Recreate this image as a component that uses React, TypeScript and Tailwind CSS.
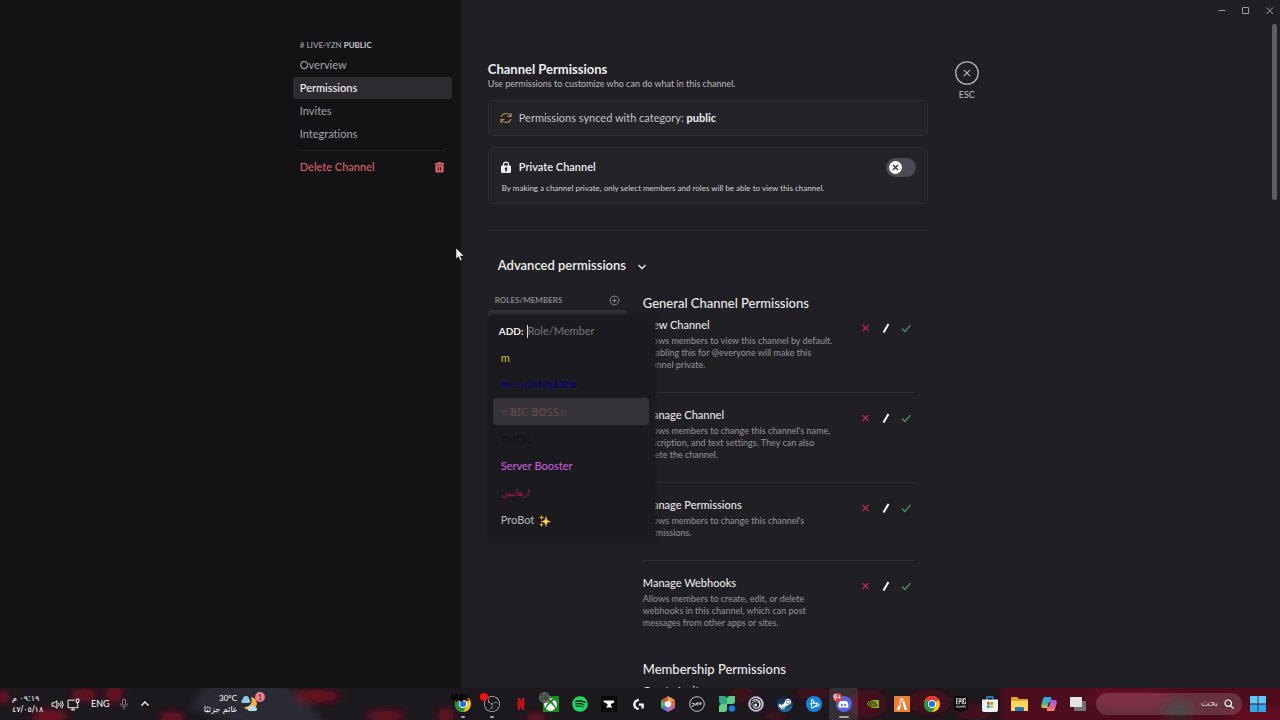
import React, { useState } from 'react';
import { FaDiscord, FaSpotify, FaSteamSymbol, FaXbox } from 'react-icons/fa';
import {
  SiEpicgames,
  SiFivem,
  SiLogitechg,
  SiNetflix,
  SiNvidia,
  SiObsstudio,
  SiUbisoft,
} from 'react-icons/si';

type PermissionValue = 'deny' | 'neutral' | 'allow';

interface Permission {
  id: string;
  title: string;
  description?: string;
}

interface Role {
  id: string;
  label: React.ReactNode;
  className: string;
}

const navItems = ['Overview', 'Permissions', 'Invites', 'Integrations'];

const generalPermissions: Permission[] = [
  {
    id: 'view-channel',
    title: 'View Channel',
    description:
      'Allows members to view this channel by default. Disabling this for @everyone will make this channel private.',
  },
  {
    id: 'manage-channel',
    title: 'Manage Channel',
    description:
      "Allows members to change this channel's name, description, and text settings. They can also delete the channel.",
  },
  {
    id: 'manage-permissions',
    title: 'Manage Permissions',
    description: "Allows members to change this channel's permissions.",
  },
  {
    id: 'manage-webhooks',
    title: 'Manage Webhooks',
    description:
      'Allows members to create, edit, or delete webhooks in this channel, which can post messages from other apps or sites.',
  },
];

const membershipPermissions: Permission[] = [{ id: 'create-invite', title: 'Create Invite' }];

const Sparkles = () => (
  <svg viewBox="0 0 24 24" className="ml-[2px] inline-block size-[12px]" aria-hidden="true">
    <path d="M14 3c1 7 2.500 8.500 9 10-6.500 1.500-8 3-9 10-1-7-2.500-8.500-10-10 7.500-1.500 9-3 10-10z" fill="#fcd34d" stroke="#fcd34d" />
    <path d="M5 1c.5 3 1 3.500 4 4-3 .5-3.500 1-4 4-.5-3-1-3.500-4-4 3-.5 3.500-1 4-4zM5 16c.4 2.500 1 3 3.500 3.500C6 20 5.400 20.500 5 23c-.4-2.500-1-3-3.500-3.500C4 19 4.600 18.500 5 16z" fill="#fbbf24" stroke="#fbbf24" />
  </svg>
);

const roles: Role[] = [
  { id: 'm', label: 'm', className: 'text-[11px] text-[#d3b92c]' },
  {
    id: 'co-owner',
    label: (
      <>
        ♚co-
        <span className="font-['DejaVu_Serif',serif] text-[10px] font-bold italic">OWNER</span>♚
      </>
    ),
    className: 'text-[10px] text-[#0b0570]',
  },
  { id: 'big-boss', label: '☆𝔹𝕀𝔾 𝔹𝕆𝕊𝕊☆', className: 'text-[10px] text-[#7d4f5c]' },
  { id: 'dark', label: 'ηιοΩε', className: 'text-[11px] text-[#101012]' },
  { id: 'booster', label: 'Server Booster', className: 'text-[11px] text-[#d45fe0]' },
  { id: 'arabic', label: 'ارهابيين', className: 'text-[9px] text-[#a3194a]' },
  {
    id: 'probot',
    label: (
      <>
        ProBot <Sparkles />
      </>
    ),
    className: 'text-[11px] text-[#b5b6bb]',
  },
];

const Sidebar = () => {
  const [active, setActive] = useState('Permissions');

  return (
    <aside className="flex w-[36%] shrink-0 justify-end bg-[#131315] pr-[9px] pt-[38px]">
      <nav className="w-[159px]">
        <h2 className="px-[7px] text-[8px] leading-[14px] font-bold text-[#8c8d93]">
          # LIVE-YZN <span className="text-[#c9cacf]">PUBLIC</span>
        </h2>
        <div className="mt-[2px] flex flex-col gap-px">
          {navItems.map((item) => (
            <button
              key={item}
              type="button"
              onClick={() => setActive(item)}
              className={`h-[22px] rounded-[3px] px-[7px] text-left text-[11px] ${
                item === active ? 'bg-[#2c2c30] font-medium text-[#f2f2f4]' : 'text-[#a3a4aa]'
              }`}
            >
              {item}
            </button>
          ))}
        </div>
        <hr className="mx-[7px] my-[5px] border-[#242428]" />
        <button
          type="button"
          className="flex h-[22px] w-full items-center justify-between px-[7px] text-[11px] font-medium text-[#d95f6b]"
        >
          Delete Channel
          <svg viewBox="0 0 24 24" className="size-[11px]" fill="currentColor" aria-hidden="true">
            <path d="M9 0h6l1 2h6v4H2V2h6z" />
            <path fillRule="evenodd" d="M3 7h18v13a3 3 0 0 1-3 3H6a3 3 0 0 1-3-3zm5.500 4v8h2v-8zm5 0v8h2v-8z" />
          </svg>
        </button>
      </nav>
    </aside>
  );
};

const WindowControls = () => (
  <div className="flex h-[22px] shrink-0 items-center justify-end gap-[14px] pr-[5px] text-[#9b9ba3]">
    <button type="button" aria-label="Minimize">
      <svg viewBox="0 0 10 10" className="size-[10px]" stroke="currentColor" fill="none">
        <path d="M1.500 4.500h7" />
      </svg>
    </button>
    <button type="button" aria-label="Maximize">
      <svg viewBox="0 0 10 10" className="size-[10px]" stroke="currentColor" fill="none">
        <path d="M1.500 1.500h6v6h-6z" />
      </svg>
    </button>
    <button type="button" aria-label="Close window">
      <svg viewBox="0 0 10 10" className="size-[10px]" stroke="currentColor" fill="none">
        <path d="m1.500 1.500 6.500 6.500M8 1.500 1.500 8" />
      </svg>
    </button>
  </div>
);

const choices: { value: PermissionValue; color: string; path: string; width: number }[] = [
  { value: 'deny', color: 'text-[#b32c48]', path: 'M5.500 6l6 6M11.500 6l-6 6', width: 1.2 },
  { value: 'neutral', color: 'text-white', path: 'M11.500 5l-5 8.500', width: 2 },
  { value: 'allow', color: 'text-[#469165]', path: 'M5 9.500l3 3 5.500-6.500', width: 1.2 },
];

const PermissionRow = ({ permission }: { permission: Permission }) => {
  const [value, setValue] = useState<PermissionValue>('neutral');

  return (
    <li className="flex justify-between border-b border-[#303035] pt-[14px] pb-[21px] first:pt-0 last:border-b-0 last:pb-0">
      <div className="w-[190px]">
        <h4 className="text-[11px] leading-[16px] font-medium text-[#e6e6e9]">{permission.title}</h4>
        {permission.description && (
          <p className="mt-[2px] text-[9px] leading-[12px] text-[#95969c]">{permission.description}</p>
        )}
      </div>
      <div className="mt-[2px] flex gap-[2px]" role="radiogroup" aria-label={permission.title}>
        {choices.map((choice) => (
          <label key={choice.value} className={`relative size-[18px] rounded-[3px] ${choice.color}`}>
            <input
              type="radio"
              name={permission.id}
              aria-label={choice.value}
              checked={value === choice.value}
              onChange={() => setValue(choice.value)}
              className="sr-only"
            />
            <svg viewBox="0 0 18 18" className="size-[18px]" fill="none" stroke="currentColor" strokeWidth={choice.width}>
              <path d={choice.path} />
            </svg>
          </label>
        ))}
      </div>
    </li>
  );
};

const PermissionSection = ({ title, items }: { title: string; items: Permission[] }) => (
  <section>
    <h3 className="text-[13px] leading-[20px] font-medium text-[#e9e9ec]">{title}</h3>
    <ul className="mt-[4px]">
      {items.map((item) => (
        <PermissionRow key={item.id} permission={item} />
      ))}
    </ul>
  </section>
);

const RolePicker = () => (
  <div className="absolute top-[22px] left-0 z-10 w-[167px] rounded-[4px] bg-[#1b1b1f] pt-[4px] pr-[6px] pb-[8px] pl-[5px] shadow-[0_0_4px_1px_#1b1b1f]">
    <div className="flex h-[25px] items-center gap-[3px] px-[6px]">
      <label htmlFor="role-search" className="text-[10px] font-bold text-[#ececef]">
        ADD:
      </label>
      <div className="flex min-w-0 flex-1 items-center">
        <span className="h-[13px] w-px bg-[#dcdce0]" />
        <input
          id="role-search"
          placeholder="Role/Member"
          className="w-full min-w-0 bg-transparent text-[11px] outline-none placeholder:text-[#77787f]"
        />
      </div>
    </div>
    <ul>
      {roles.map((role) => (
        <li key={role.id}>
          <button
            type="button"
            className={`block h-[27px] w-full overflow-hidden rounded-[3px] px-[8px] text-left leading-[26px] ${role.className} ${
              role.id === 'big-boss' ? 'bg-[#343438]' : ''
            }`}
          >
            {role.label}
          </button>
        </li>
      ))}
    </ul>
  </div>
);

const Settings = () => {
  const [isPrivate, setIsPrivate] = useState(false);

  return (
    <main className="flex min-h-0 flex-1 gap-[27px] overflow-hidden pl-[27px]">
      <div className="w-[440px] pt-[39px]">
        <h1 className="text-[13px] leading-[17px] font-bold text-[#ededf0]">Channel Permissions</h1>
        <p className="text-[9px] leading-[12px] text-[#b9babf]">
          Use permissions to customize who can do what in this channel.
        </p>
        <div className="mt-[10px] flex h-[36px] items-center gap-[7px] rounded-[6px] border border-[#2d2d32] bg-[#232328] px-[11px] text-[11px] text-[#c3c4c9]">
          <svg viewBox="0 0 24 24" className="size-[12px] text-[#c08a50]" fill="none" stroke="currentColor" strokeWidth="2.400" aria-hidden="true">
            <path d="M2 10C3.500 5.500 7 3 12 3c4 0 7 2 9 5M22 2v7h-7M22 14c-1.500 4.500-5 7-10 7-4 0-7-2-9-5M2 22v-7h7" />
          </svg>
          <p>
            Permissions synced with category: <strong className="font-bold text-[#efeff1]">public</strong>
          </p>
        </div>
        <div className="mt-[11px] rounded-[6px] border border-[#2d2d32] bg-[#232328] px-[11px] pt-[9px] pb-[9px]">
          <div className="flex h-[20px] items-center gap-[7px]">
            <svg viewBox="0 0 24 24" className="size-[12px] text-[#eeeef0]" fill="none" aria-hidden="true">
              <path d="M7 10V7a5 5 0 0 1 10 0v3" stroke="currentColor" strokeWidth="2.500" />
              <path fillRule="evenodd" d="M4 9h16a2 2 0 0 1 2 2v10a3 3 0 0 1-3 3H5a3 3 0 0 1-3-3V11a2 2 0 0 1 2-2zm6.500 8v4h3v-4a2.500 2.500 0 1 0-3 0z" fill="currentColor" />
            </svg>
            <label htmlFor="private-channel" className="flex-1 text-[11px] font-semibold text-[#ededf0]">
              Private Channel
            </label>
            <label className="relative flex h-[19px] w-[30px] items-center rounded-full bg-[#494a53] px-[3px]">
              <input
                id="private-channel"
                type="checkbox"
                checked={isPrivate}
                onChange={(e) => setIsPrivate(e.target.checked)}
                className="sr-only"
              />
              <span className={`size-[13px] rounded-full bg-white ${isPrivate ? 'ml-auto' : ''}`}>
                <svg viewBox="0 0 13 13" className="size-[13px]" stroke="#3b3c44" strokeWidth="1.600" fill="none">
                  <path d="m4 4 5 5M9 4 4 9" />
                </svg>
              </span>
            </label>
          </div>
          <p className="mt-[5px] px-[2px] text-[8px] leading-[12px] text-[#d2d3d7]">
            By making a channel private, only select members and roles will be able to view this channel.
          </p>
        </div>
        <hr className="mt-[26px] border-[#303035]" />
        <button type="button" className="mt-[25px] ml-[10px] flex h-[20px] items-center gap-[11px] text-[13px] font-semibold text-[#ededf0]">
          Advanced permissions
          <svg viewBox="0 0 10 10" className="size-[10px]" fill="none" stroke="currentColor" strokeWidth="1.300" aria-hidden="true">
            <path d="m1.500 4 3.500 3.500 3.500-3.500" />
          </svg>
        </button>
        <div className="mt-[17px] flex gap-[16px] pr-[13px]">
          <div className="relative w-[139px] shrink-0">
            <div className="flex h-[14px] items-center justify-between px-[7px]">
              <h3 className="text-[8px] font-bold text-[#85868d]">ROLES/MEMBERS</h3>
              <button type="button" aria-label="Add role or member">
                <svg viewBox="0 0 12 12" className="size-[11px] text-[#94959b]" fill="none" stroke="currentColor" aria-hidden="true">
                  <circle cx="6" cy="6" r="4.800" />
                  <path d="M6 3.500v5M3.500 6h5" />
                </svg>
              </button>
            </div>
            <div className="mt-[3px] h-[22px] rounded-[3px] bg-[#343438]" />
            <RolePicker />
          </div>
          <div className="flex min-w-0 flex-1 flex-col gap-[30px]">
            <PermissionSection title="General Channel Permissions" items={generalPermissions} />
            <PermissionSection title="Membership Permissions" items={membershipPermissions} />
          </div>
        </div>
      </div>
      <button type="button" className="flex h-fit flex-col items-center pt-[39px] text-[9px] leading-[12px] font-medium text-[#b4b5ba]">
        <svg viewBox="0 0 24 24" className="mb-[4px] size-[24px]" fill="none" stroke="currentColor" aria-hidden="true">
          <circle cx="12" cy="12" r="11.200" strokeWidth="1.300" />
          <path d="m8.800 8.800 6.400 6.400M15.200 8.800l-6.400 6.400" strokeWidth="1.100" />
        </svg>
        ESC
      </button>
      <div className="ml-auto pt-[2px] pr-[3px]">
        <div className="h-[176px] w-[5px] rounded-full bg-[#5e5e66]" />
      </div>
    </main>
  );
};

const Chrome = () => (
  <svg viewBox="0 0 24 24" className="size-[16px]" aria-hidden="true">
    <circle cx="12" cy="12" r="12" fill="#fbc116" />
    <path d="M12 12 1.600 6A12 12 0 0 1 22.400 6z" fill="#e33b2e" />
    <path d="M12 12 1.600 6A12 12 0 0 0 12 24l5.200-9z" fill="#229342" />
    <circle cx="12" cy="12" r="6" fill="#fff" />
    <circle cx="12" cy="12" r="4.600" fill="#1a73e8" />
  </svg>
);

const taskbarApps: { name: string; icon: React.ReactNode; running?: boolean; active?: boolean }[] = [
  {
    name: 'Chrome profile',
    running: true,
    icon: (
      <div className="relative">
        <Chrome />
        <svg viewBox="0 0 20 9" className="absolute -top-[3px] -left-[4px] h-[9px] w-[20px]" aria-hidden="true">
          <path d="M0 1l3 2 2-3 3 3 3-3 2 3 3-2 2 3-2 2 1 2-4-1-3 2-2-2-3 2-1-3-4 1z" fill="#050505" />
        </svg>
      </div>
    ),
  },
  {
    name: 'OBS Studio',
    running: true,
    icon: (
      <div className="relative text-[#b9b9bd]">
        <SiObsstudio size={16} />
        <span className="absolute -top-[3px] -left-[4px] size-[8px] rounded-full bg-[#f20d0d]" />
      </div>
    ),
  },
  { name: 'Netflix', icon: <SiNetflix size={12} className="text-[#d10d18]" /> },
  {
    name: 'Xbox',
    icon: (
      <div className="relative flex size-[16px] items-center justify-center bg-[#168b1c] text-white">
        <FaXbox size={13} />
        <span className="absolute -top-[4px] -left-[4px] flex size-[11px] items-center justify-center rounded-full bg-[#606060] text-[7px] text-[#222]">
          18
        </span>
      </div>
    ),
  },
  { name: 'Spotify', icon: <FaSpotify size={16} className="text-[#1ed760]" /> },
  {
    name: 'CurseForge',
    icon: (
      <svg viewBox="0 0 16 16" className="size-[16px]" aria-hidden="true">
        <path d="M0 0h16v16H0z" fill="#060606" />
        <path d="M2.500 4.500H13V6.500L10 8v1.500l1.500 2H5l1.500-2V8L2.500 6z" fill="#f4f4f4" />
      </svg>
    ),
  },
  { name: 'Logitech G HUB', icon: <SiLogitechg size={11} className="text-white" /> },
  {
    name: 'Hex color',
    icon: (
      <svg viewBox="0 0 16 16" className="size-[16px]" aria-hidden="true">
        <path d="M8 0 15 4 8 8z" fill="#e8a33a" />
        <path d="M15 4v8L8 8z" fill="#e0655b" />
        <path d="M15 12 8 16V8z" fill="#c568b5" />
        <path d="M8 16 1 12l7-4z" fill="#5c7fd8" />
        <path d="M1 12V4l7 4z" fill="#53b06a" />
        <path d="M1 4 8 0v8z" fill="#c95a40" />
        <path d="m8 4.500 3.200 1.750v3.500L8 11.500l-3.200-1.750v-3.500z" fill="#f3efe9" />
      </svg>
    ),
  },
  {
    name: 'Steelseries',
    icon: (
      <svg viewBox="0 0 16 16" className="size-[16px]" fill="none" stroke="#c7c7ca" aria-hidden="true">
        <circle cx="8" cy="8" r="7.300" />
        <path d="M2.500 10.500c2 0 2.500-.5 3-3M6.500 9.500l1-2.500h5.500M8.500 9.500l.5-2M11 9l.5-1.500M3 7.500h2" strokeWidth="1.200" />
      </svg>
    ),
  },
  {
    name: 'Clover',
    icon: (
      <svg viewBox="0 0 16 16" className="size-[16px]" aria-hidden="true">
        <path d="M0 0h5a3 3 0 0 1 3 3v5H3a3 3 0 0 1-3-3z" fill="#35a883" />
        <path d="M16 0v5a3 3 0 0 1-3 3H8V3a3 3 0 0 1 3-3z" fill="#5bcf88" />
        <path d="M0 16v-5a3 3 0 0 1 3-3h5v5a3 3 0 0 1-3 3z" fill="#64cf89" />
        <circle cx="13" cy="12.500" r="3.200" fill="#1683d8" />
      </svg>
    ),
  },
  {
    name: 'Ubisoft Connect',
    icon: (
      <div className="flex size-[16px] items-center justify-center rounded-full border border-[#8672b7] bg-[#e7e7ed] text-[#15151b]">
        <SiUbisoft size={12} />
      </div>
    ),
  },
  {
    name: 'Steam',
    icon: (
      <div className="flex size-[16px] items-center justify-center rounded-full bg-linear-to-b from-[#111d38] to-[#177aae] text-white">
        <FaSteamSymbol size={14} />
      </div>
    ),
  },
  {
    name: 'Battle.net',
    icon: (
      <svg viewBox="0 0 16 16" className="size-[16px]" aria-hidden="true">
        <circle cx="8" cy="8" r="8" fill="#1284de" />
        <path d="M5.500 12V4c2.500-.5 3 2 2 3.500M5.500 12c3 0 5.500-3 6-5.500M4 8c3-1.500 8-1 9 .8 0 1.500-3 2-5.500 1.200" fill="none" stroke="#e6f5ff" strokeWidth="1.100" />
      </svg>
    ),
  },
  {
    name: 'Discord',
    running: true,
    active: true,
    icon: (
      <div className="relative flex size-[16px] items-center justify-center rounded-full bg-[#5662e3] text-white">
        <FaDiscord size={11} />
        <span className="absolute -top-[3px] -left-[3px] flex size-[9px] items-center justify-center rounded-full bg-[#d8414a] text-[7px] font-bold">
          9+
        </span>
      </div>
    ),
  },
  { name: 'NVIDIA', icon: <SiNvidia size={12} className="text-[#76b900]" /> },
  {
    name: 'FiveM',
    icon: (
      <div className="flex size-[16px] items-center justify-center bg-[#ee7f31] text-white">
        <SiFivem size={12} />
      </div>
    ),
  },
  { name: 'Chrome', icon: <Chrome /> },
  {
    name: 'Epic Games',
    icon: (
      <div className="relative text-[#08080a]">
        <span className="absolute top-[1px] left-[3px] h-[11px] w-[10px] bg-[#dedede]" />
        <SiEpicgames size={16} className="relative" />
      </div>
    ),
  },
  {
    name: 'Microsoft Store',
    icon: (
      <svg viewBox="0 0 16 16" className="size-[16px]" aria-hidden="true">
        <path d="M5 4V1h6v3" fill="none" stroke="#2f92dc" strokeWidth="1.300" />
        <path d="M0 3.500h16V14a2 2 0 0 1-2 2H2a2 2 0 0 1-2-2z" fill="#edf0f5" />
        <path d="M5 6h2.700v2.700H5z" fill="#f25022" />
        <path d="M8.300 6H11v2.700H8.300z" fill="#7fba00" />
        <path d="M5 9.300h2.700V12H5z" fill="#00a4ef" />
        <path d="M8.300 9.300H11V12H8.300z" fill="#ffb900" />
      </svg>
    ),
  },
  {
    name: 'File Explorer',
    icon: (
      <svg viewBox="0 0 17 16" className="h-[16px] w-[17px]" aria-hidden="true">
        <path d="M0 2a1 1 0 0 1 1-1h5l2 2h8a1 1 0 0 1 1 1v10a1 1 0 0 1-1 1H1a1 1 0 0 1-1-1z" fill="#e6a51f" />
        <path d="M0 5h17v9a1 1 0 0 1-1 1H1a1 1 0 0 1-1-1z" fill="#fbd25c" />
        <path d="M4 15v-3a1 1 0 0 1 1-1h7a1 1 0 0 1 1 1v3z" fill="#1d79bd" />
      </svg>
    ),
  },
  {
    name: 'Copilot',
    icon: (
      <svg viewBox="0 0 16 16" className="size-[16px]" aria-hidden="true">
        <defs>
          <linearGradient id="copilot-a" x1="0" y1="0" x2="0" y2="1">
            <stop stopColor="#2aa5f2" />
            <stop offset=".6" stopColor="#43b687" />
            <stop offset="1" stopColor="#e3c532" />
          </linearGradient>
          <linearGradient id="copilot-b" x1="0" y1="0" x2="0" y2="1">
            <stop stopColor="#9168ee" />
            <stop offset=".6" stopColor="#e35aa2" />
            <stop offset="1" stopColor="#f58a52" />
          </linearGradient>
        </defs>
        <path d="M4 1h5c2 0 1.500 2 1 3L8 10c-.5 1.500-1 2-3 2H2c-2 0-2-2-1.500-4l1.500-5c.3-1.500 1-2 2-2z" fill="url(#copilot-a)" />
        <path d="M12 15H7c-2 0-1.500-2-1-3l2-6c.5-1.500 1-2 3-2h3c2 0 2 2 1.500 4L14 13c-.3 1.500-1 2-2 2z" fill="url(#copilot-b)" />
        <path d="m8 6-1.500 4.500H8L9.500 6z" fill="#3b1f4d" />
      </svg>
    ),
  },
  {
    name: 'Task View',
    icon: (
      <svg viewBox="0 0 16 16" className="size-[16px]" aria-hidden="true">
        <path d="M4 5h12v10H4z" fill="#71717a" />
        <path d="M0 1h12v10H0z" fill="#e3e3e3" />
      </svg>
    ),
  },
];

const TaskbarWallpaper = () => (
  <svg viewBox="0 0 1280 32" preserveAspectRatio="none" className="absolute inset-0 h-full w-full" aria-hidden="true">
    <defs>
      <filter id="soften" filterUnits="userSpaceOnUse" x="-40" y="-40" width="1360" height="112">
        <feGaussianBlur stdDeviation="4" />
      </filter>
    </defs>
    <path d="M0 0h1280v32H0z" fill="#1b191d" />
    <g filter="url(#soften)">
      <path d="M210 -10h70l50 50h-80l-60-20z" fill="#2c2c34" />
      <g fill="#780a20">
        <ellipse cx="2" cy="9" rx="8" ry="6" />
        <ellipse cx="50" cy="29" rx="18" ry="7" />
        <ellipse cx="84" cy="7" rx="13" ry="6" />
        <ellipse cx="114" cy="6" rx="9" ry="8" />
        <ellipse cx="172" cy="30" rx="12" ry="6" />
        <ellipse cx="318" cy="8" rx="22" ry="6" />
        <ellipse cx="385" cy="28" rx="20" ry="5" />
        <ellipse cx="446" cy="27" rx="8" ry="7" />
        <ellipse cx="536" cy="30" rx="10" ry="5" />
      </g>
      <g fill="#4a0c1b">
        <ellipse cx="742" cy="6" rx="12" ry="7" />
        <ellipse cx="775" cy="29" rx="12" ry="5" />
        <ellipse cx="812" cy="5" rx="18" ry="6" />
        <ellipse cx="868" cy="16" rx="20" ry="14" />
        <ellipse cx="930" cy="14" rx="22" ry="12" />
        <ellipse cx="975" cy="24" rx="18" ry="8" />
      </g>
      <path d="M1000 -10h320v60H1000z" fill="#4d0c1d" />
      <ellipse cx="1130" cy="10" rx="40" ry="10" fill="#681126" />
      <ellipse cx="1258" cy="28" rx="30" ry="8" fill="#650b20" />
      <ellipse cx="1178" cy="22" rx="14" ry="10" fill="#33282c" />
    </g>
  </svg>
);

const Taskbar = () => (
  <footer className="relative h-[32px] shrink-0 text-[8px] text-white">
    <TaskbarWallpaper />
    <div className="relative flex h-full items-center pr-[14px] pl-[12px]">
      <div className="w-[30px] font-['DejaVu_Sans',sans-serif] text-[8px] leading-[11px] whitespace-nowrap">
        <div className="w-fit" dir="rtl">
          ٠٩:١٩ م
        </div>
        <div>٤٧/٠٥/١٨</div>
      </div>
      <svg viewBox="0 0 24 24" className="ml-[9px] size-[13px]" fill="none" stroke="currentColor" strokeWidth="1.800" aria-hidden="true">
        <path d="M2 9h4l5-4v14l-5-4H2zM14 9q2 3 0 6M17 7q4 5 0 10M20 5q5 7 0 14" />
      </svg>
      <svg viewBox="0 0 24 24" className="ml-[3px] size-[13px]" fill="none" stroke="currentColor" strokeWidth="1.800" aria-hidden="true">
        <path d="M14 4H2v14h18v-6M7 22h8M11 18v4M17 2h5v6h-5zM19.500 8v4" />
      </svg>
      <span className="ml-[11px] w-[17px] text-[9px]">ENG</span>
      <svg viewBox="0 0 24 24" className="ml-[10px] size-[12px] text-[#77777c]" fill="none" stroke="currentColor" strokeWidth="2" aria-hidden="true">
        <path d="M9 3h6v11H9zM5 11c0 9 14 9 14 0M12 18v5" />
      </svg>
      <button type="button" aria-label="Show hidden icons" className="ml-[10px]">
        <svg viewBox="0 0 10 10" className="size-[10px]" fill="none" stroke="currentColor" strokeWidth="1.400">
          <path d="m1.500 6.500 3.500-3.500 3.500 3.500" />
        </svg>
      </button>
      <div className="ml-[53px] flex items-center gap-[4px]">
        <div className="w-[34px] text-right leading-[11px] whitespace-nowrap">
          <div>30°C</div>
          <div dir="rtl" className="text-right font-['DejaVu_Sans',sans-serif] text-[8px]">
            غائم جزئيًا
          </div>
        </div>
        <div className="relative">
          <svg viewBox="0 0 18 18" className="size-[18px]" aria-hidden="true">
            <path d="M10 2c8 1 8 13-1 13-3 0-5-1-6-3 6 0 9-4 7-10z" fill="#f6b23c" />
            <path d="M1 8a2.500 2.500 0 0 1 1-4 3 3 0 0 1 6 0 2.200 2.200 0 0 1 0 4z" fill="#91c9f5" />
            <path d="M8 16a2.200 2.200 0 0 1 0-4 3 3 0 0 1 5.500 0 2 2 0 0 1 1 4z" fill="#b4dbf8" />
          </svg>
          <span className="absolute -top-[3px] -right-[6px] flex size-[10px] items-center justify-center rounded-full bg-[#ed808b] text-[7px] text-[#431c23]">
            1
          </span>
        </div>
      </div>
      <div className="ml-auto grid h-full w-[645px] grid-cols-[repeat(22,1fr)]">
        {taskbarApps.map((app) => (
          <button
            key={app.name}
            type="button"
            aria-label={app.name}
            className={`relative flex items-center justify-center rounded-[3px] ${app.active ? 'bg-white/10' : ''}`}
          >
            {app.icon}
            {app.running && (
              <span className={`absolute bottom-[2px] h-[2px] rounded-full bg-[#a5a5aa] ${app.active ? 'w-[10px]' : 'w-[4px]'}`} />
            )}
          </button>
        ))}
      </div>
      <div className="ml-[3px] flex h-[22px] w-[146px] items-center gap-[6px] rounded-full bg-white/15 px-[8px]">
        <input
          dir="rtl"
          aria-label="بحث"
          placeholder="بحث"
          className="min-w-0 flex-1 bg-transparent font-['DejaVu_Sans',sans-serif] text-[9px] outline-none placeholder:text-[#d5cdd0]"
        />
        <svg viewBox="0 0 10 10" className="size-[10px]" fill="none" stroke="currentColor" strokeWidth="1.200" aria-hidden="true">
          <circle cx="4.200" cy="4.200" r="3.200" />
          <path d="m6.500 6.500 3 3" />
        </svg>
      </div>
      <button type="button" aria-label="Start" className="ml-[8px]">
        <svg viewBox="0 0 16 16" className="size-[16px]" aria-hidden="true">
          <path d="M0 0h7.600v7.600H0zM8.400 0H16v7.600H8.400z" fill="#5fcaf7" />
          <path d="M0 8.400h7.600V16H0zM8.400 8.400H16V16H8.400z" fill="#2fa8ee" />
        </svg>
      </button>
    </div>
  </footer>
);

const App: React.FC = () => (
  <div className="flex h-screen flex-col overflow-hidden bg-[#202024] font-['Lato','DejaVu_Sans',sans-serif] [font-variant-ligatures:none]">
    <div className="flex min-h-0 flex-1">
      <Sidebar />
      <div className="flex min-w-0 flex-1 flex-col">
        <WindowControls />
        <Settings />
      </div>
    </div>
    <Taskbar />
    {/* mouse pointer */}
    <svg viewBox="0 0 10 15" className="absolute top-[247px] left-[455px] h-[15px] w-[10px]" aria-hidden="true">
      <path d="M1 1v11l2.500-2.300 1.800 4 1.800-.8-1.800-3.900H9z" fill="#fff" stroke="#111" strokeWidth=".6" />
    </svg>
  </div>
);

export default App;
